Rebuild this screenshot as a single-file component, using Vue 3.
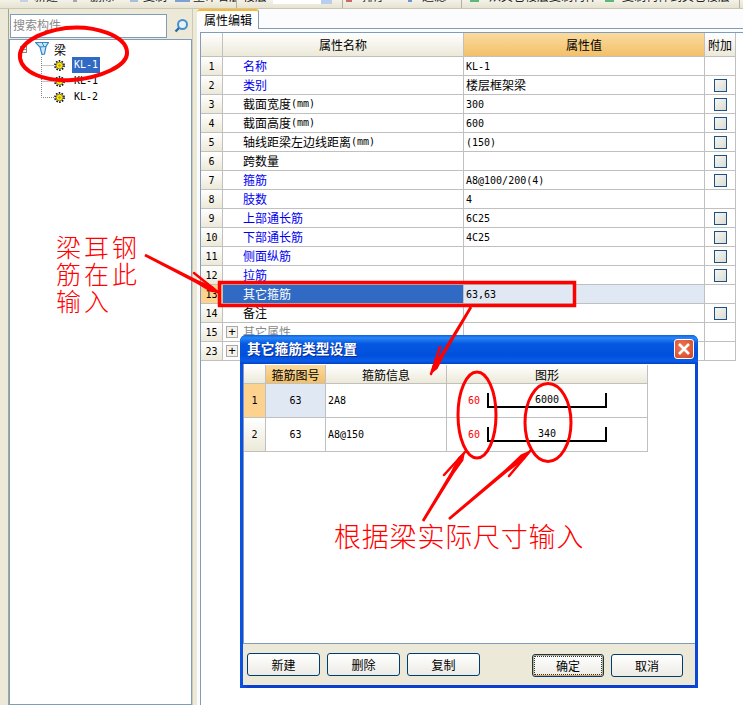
<template>
  <div class="app">
    <!-- Toolbar, mostly cropped off in the screenshot -->
    <div class="toolbar">
      <template v-for="(tool, i) in tools" :key="i">
        <div v-if="tool.sep" class="tool-sep" :style="{ width: tool.sep + 'px' }"></div>
        <div v-else-if="tool.combo" class="tool-combo"><span class="tool-combo-btn"></span></div>
        <div v-else class="tool" :style="{ width: tool.width + 'px' }">
          <span
            class="tool-icon"
            :style="{ width: tool.icon + 'px', marginRight: tool.gap + 'px', background: tool.color }"
          ></span>
          <span class="tool-label">{{ tool.label }}</span>
        </div>
      </template>
    </div>

    <div class="main">
      <div class="side-rail"></div>

      <!-- Tree of components -->
      <div class="tree-col">
        <div class="search-row">
          <div class="search-input">搜索构件</div>
          <svg class="search-btn" width="16" height="16" viewBox="0 0 16 16">
            <circle cx="9.5" cy="6.5" r="4.5" fill="#e4f2fb" stroke="#4a90c8" stroke-width="2" />
            <path d="M6 10 L2.5 13.5" stroke="#2a6aa8" stroke-width="2.4" />
          </svg>
        </div>
        <div class="tree">
          <div class="tree-root">
            <span class="expander"></span>
            <svg class="root-icon" width="14" height="14" viewBox="0 0 14 14">
              <path d="M0.5 1.5 H13.5 L11 5.5 L9.5 13 L7 13.5 L5 6 Z" fill="#cfe6f6" stroke="#2f86c6" stroke-width="1.2" />
              <path d="M5 6 L11 5.5 M7 1.5 L9 5.5" stroke="#2f86c6" />
            </svg>
            <span class="tree-text">梁</span>
          </div>
          <div class="tree-children">
            <svg class="tree-lines" width="13" height="48" viewBox="0 0 13 48">
              <path
                d="M0.5 0 V40.5 H13 M0.5 8.5 H13 M0.5 24.5 H13"
                fill="none"
                stroke="#888"
                stroke-dasharray="1 1"
              />
            </svg>
            <div class="tree-items">
              <div v-for="(node, i) in nodes" :key="i" class="tree-item">
                <svg class="gear" width="11" height="11" viewBox="0 0 11 11">
                  <circle cx="5.5" cy="5.5" r="4.6" fill="none" stroke="#111" stroke-width="1.6" stroke-dasharray="1.6 1.3" />
                  <circle cx="5.5" cy="5.5" r="3.4" fill="#ffe800" stroke="#333" stroke-width="0.6" />
                  <circle cx="5.5" cy="5.5" r="1.2" fill="#b8a000" />
                </svg>
                <span class="tree-label" :class="{ selected: i === 0 }">{{ node }}</span>
              </div>
            </div>
          </div>
        </div>
      </div>

      <div class="splitter"></div>

      <!-- Property editor -->
      <div class="editor">
        <div class="tab-strip">
          <div class="tab">属性编辑</div>
        </div>
        <div class="table-wrap">
          <div class="prop-row prop-head">
            <div class="cell num-head"></div>
            <div class="cell head-cell">属性名称</div>
            <div class="cell head-cell head-active">属性值</div>
            <div class="cell head-cell">附加</div>
          </div>
          <div
            v-for="row in rows"
            :key="row.no"
            class="prop-row"
            :class="{ current: row.no === 13 }"
          >
            <div class="cell num-cell">{{ row.no }}</div>
            <div class="cell name-cell" :class="{ blue: row.blue, muted: row.group }">
              <span v-if="row.group" class="plus-box">+</span>
              <span>{{ row.name }}</span><span v-if="row.unit" class="latin">{{ row.unit }}</span>
            </div>
            <div class="cell value-cell" :class="row.cjk ? 'cjk' : 'latin'">{{ row.value }}</div>
            <div class="cell add-cell">
              <span v-if="row.check" class="checkbox"></span>
            </div>
          </div>
        </div>
      </div>
    </div>

    <!-- Dialog floating over the editor -->
    <div class="dialog">
      <div class="dialog-title">
        <span class="dialog-title-text">其它箍筋类型设置</span>
        <span class="close-btn">
          <svg width="18" height="18" viewBox="0 0 18 18">
            <path d="M4 4 L14 14 M14 4 L4 14" stroke="#fff" stroke-width="2.6" />
          </svg>
        </span>
      </div>
      <div class="dialog-body">
        <div class="dialog-grid-area">
          <div class="d-row d-head">
            <div class="d-cell d-num-head"></div>
            <div class="d-cell d-head-cell d-head-active">箍筋图号</div>
            <div class="d-cell d-head-cell">箍筋信息</div>
            <div class="d-cell d-head-cell">图形</div>
          </div>
          <div v-for="(bar, i) in bars" :key="i" class="d-row d-data">
            <div class="d-cell d-num" :class="{ 'd-num-active': i === 0 }">{{ i + 1 }}</div>
            <div class="d-cell d-code latin" :class="{ 'd-code-active': i === 0 }">{{ bar.code }}</div>
            <div class="d-cell d-info latin">{{ bar.info }}</div>
            <div class="d-cell d-shape latin">
              <span class="hook-len">60</span>
              <span class="bar-shape"><span class="bar-len">{{ bar.len }}</span></span>
            </div>
          </div>
        </div>
        <div class="dialog-buttons">
          <div class="btn-group">
            <button class="btn">新建</button>
            <button class="btn">删除</button>
            <button class="btn">复制</button>
          </div>
          <div class="btn-group btn-group-right">
            <button class="btn btn-small btn-default"><span>确定</span></button>
            <button class="btn btn-small">取消</button>
          </div>
        </div>
      </div>
    </div>

    <!-- Red markup drawn on top of the screenshot -->
    <svg class="markup" width="743" height="705" viewBox="0 0 743 705">
      <g fill="none" stroke="#f00" stroke-linecap="round" stroke-linejoin="round">
        <path
          stroke-width="4"
          d="M20 58 C18 44 38 32 66 28 C96 25 126 36 127 52 C128 66 100 78 72 80 C44 82 22 72 20 58 Z"
        />
        <rect x="219.5" y="282.5" width="355" height="23" stroke-width="3.5" stroke-linejoin="miter" />
        <ellipse cx="477" cy="415" rx="19" ry="43" stroke-width="3" />
        <ellipse cx="548" cy="422.5" rx="23" ry="39" stroke-width="3" />
        <path
          v-for="(arrow, i) in arrows"
          :key="'wing' + i"
          stroke-width="2.5"
          :d="`M${arrow.wing[0]} ${arrow.wing[1]} L${arrow.to[0]} ${arrow.to[1]}`"
        />
      </g>
      <polygon v-for="(arrow, i) in arrows" :key="i" :points="shaft(arrow)" fill="#f00" />
    </svg>
    <div class="note note-left">梁耳钢<br />筋在此<br />输入</div>
    <div class="note note-bottom">根据梁实际尺寸输入</div>
  </div>
</template>

<script setup>
const tools = [
  { label: '新建', width: 53, icon: 8, gap: 6, color: '#c3d2e6' },
  { label: '删除', width: 57, icon: 4, gap: 13, color: '#a8a8a8' },
  { label: '复制', width: 45, icon: 8, gap: 5, color: '#a9bedc' },
  { label: '重命名层', width: 61, icon: 15, gap: 3, color: '#7fa0d4' },
  { sep: 7 },
  { label: '楼层', width: 30, icon: 0, gap: 0, color: 'transparent' },
  { combo: true },
  { sep: 4 },
  { label: '排序', width: 62, icon: 6, gap: 10, color: '#c86a6a' },
  { label: '过滤', width: 53, icon: 4, gap: 10, color: '#6f96d0' },
  { sep: 9 },
  { label: '从其它楼层复制构件', width: 135, icon: 9, gap: 10, color: '#5cb878' },
  { label: '复制构件到其它楼层', width: 134, icon: 9, gap: 8, color: '#5cb878' },
  { sep: 2 }
]

const nodes = ['KL-1', 'KL-1', 'KL-2']

const rows = [
  { no: 1, name: '名称', value: 'KL-1', blue: true },
  { no: 2, name: '类别', value: '楼层框架梁', blue: true, cjk: true, check: true },
  { no: 3, name: '截面宽度', unit: '(mm)', value: '300', check: true },
  { no: 4, name: '截面高度', unit: '(mm)', value: '600', check: true },
  { no: 5, name: '轴线距梁左边线距离', unit: '(mm)', value: '(150)', check: true },
  { no: 6, name: '跨数量', value: '', check: true },
  { no: 7, name: '箍筋', value: 'A8@100/200(4)', blue: true, check: true },
  { no: 8, name: '肢数', value: '4', blue: true },
  { no: 9, name: '上部通长筋', value: '6C25', blue: true, check: true },
  { no: 10, name: '下部通长筋', value: '4C25', blue: true, check: true },
  { no: 11, name: '侧面纵筋', value: '', blue: true, check: true },
  { no: 12, name: '拉筋', value: '', blue: true, check: true },
  { no: 13, name: '其它箍筋', value: '63,63' },
  { no: 14, name: '备注', value: '', check: true },
  { no: 15, name: '其它属性', value: '', group: true },
  { no: 23, name: '显示样式', value: '', group: true }
]

const bars = [
  { code: '63', info: '2A8', len: '6000' },
  { code: '63', info: 'A8@150', len: '340' }
]

const arrows = [
  { from: [145, 255], to: [219, 293], wing: [194, 273] },
  { from: [471, 307], to: [431, 374], wing: [440, 347] },
  { from: [423, 521], to: [465, 452], wing: [444, 475] },
  { from: [449, 519], to: [531, 450], wing: [509, 476] }
]

// hand-drawn arrows get thicker toward the tip
function shaft({ from, to }) {
  const dx = to[0] - from[0]
  const dy = to[1] - from[1]
  const len = Math.hypot(dx, dy)
  const nx = -dy / len
  const ny = dx / len
  const at = (t, w) => [from[0] + dx * t + nx * w, from[1] + dy * t + ny * w].join(',')
  return [at(0, 1.4), at(0.7, 1.8), at(0.9, 3), at(1, 0), at(0.9, -3), at(0.7, -1.8), at(0, -1.4)].join(' ')
}
</script>

<style>
html,
body {
  margin: 0;
  padding: 0;
  background: #ece9d8;
}
</style>

<style scoped>
.app {
  position: relative;
  width: 743px;
  height: 705px;
  overflow: hidden;
  display: flex;
  flex-direction: column;
  background: #ece9d8;
  color: #000;
  font-family: "Noto Sans CJK SC", "Liberation Sans", sans-serif;
  font-size: 12px;
}

.latin {
  font-family: "DejaVu Sans Mono", "Liberation Mono", monospace;
  font-size: 10px;
}

.cjk {
  font-size: 12px;
}

/* Toolbar */
.toolbar {
  height: 8px;
  flex: none;
  display: flex;
  padding-left: 20px;
  overflow: hidden;
  background: linear-gradient(#f4f2e8, #e6e3d2);
  border-bottom: 1px solid #c9c6b2;
}

.tool {
  flex: none;
  display: flex;
  height: 12px;
  margin-top: -10px;
  line-height: 12px;
  white-space: nowrap;
  overflow: hidden;
}

.tool-sep {
  flex: none;
  box-sizing: border-box;
  height: 8px;
  border-left: 1px solid #b4b19e;
}

.tool-icon {
  height: 12px;
  flex: none;
}

.tool-label {
  color: #222;
}

.tool-combo {
  flex: none;
  width: 59px;
  height: 4px;
  margin-right: 10px;
  display: flex;
  justify-content: flex-end;
  background: #fff;
}

.tool-combo-btn {
  width: 11px;
  background: #b9cdee;
}

/* Left column */
.main {
  flex: 1;
  min-height: 0;
  display: flex;
}

.side-rail {
  width: 8px;
  flex: none;
  border-right: 1px solid #a6a595;
}

.tree-col {
  width: 183px;
  flex: none;
  display: flex;
  flex-direction: column;
}

.search-row {
  height: 30px;
  flex: none;
  box-sizing: border-box;
  padding: 5px 0 0 1px;
  display: flex;
  gap: 6px;
}

.search-input {
  width: 157px;
  height: 24px;
  box-sizing: border-box;
  border: 1px solid #7f9db9;
  background: #fff;
  color: #888;
  font-size: 12px;
  line-height: 20px;
  padding-left: 2px;
}

.search-btn {
  margin-top: 4px;
}

.tree {
  flex: 1;
  box-sizing: border-box;
  border: 1px solid #7f9db9;
  background: #fff;
  padding: 1px 0 0 10px;
}

.tree-root {
  display: flex;
  align-items: center;
  height: 16px;
}

.expander {
  width: 7px;
  height: 7px;
  margin-right: 8px;
  border: 1px solid #888;
  box-sizing: border-box;
  background: linear-gradient(#888, #888) center / 5px 1px no-repeat #f4f4f4;
}

.root-icon {
  margin-top: -2px;
}

.tree-text {
  margin-left: 5px;
}

.tree-children {
  display: flex;
  margin-left: 21px;
}

.tree-lines {
  flex: none;
}

.tree-items {
  display: flex;
  flex-direction: column;
}

.tree-item {
  display: flex;
  align-items: center;
  height: 16px;
}

.tree-label {
  margin-left: 7px;
  padding: 0 2px;
  height: 16px;
  line-height: 16px;
  font-family: "DejaVu Sans Mono", "Liberation Mono", monospace;
  font-size: 10px;
}

.tree-label.selected {
  background: #316ac5;
  color: #fff;
}

.splitter {
  width: 5px;
  flex: none;
  background: #ece9d8;
  border-left: 1px solid #ccc9b6;
  box-sizing: border-box;
}

/* Property table */
.editor {
  flex: 1;
  min-width: 0;
  display: flex;
  flex-direction: column;
  background: #fcfcff;
}

.tab-strip {
  height: 20px;
  flex: none;
  box-sizing: border-box;
  border-bottom: 1px solid #7f9db9;
  display: flex;
}

.tab {
  width: 62px;
  height: 20px;
  box-sizing: border-box;
  border-top: 2px solid #ffb82e;
  border-right: 1px solid #7f9db9;
  background: #fff;
  padding-left: 7px;
  line-height: 17px;
  border-radius: 3px 3px 0 0;
}

.table-wrap {
  flex: 1;
  margin: 3px 0 0 3px;
  border-top: 1px solid #7f9db9;
  border-left: 1px solid #7f9db9;
  background: #fff;
}

.prop-row {
  display: grid;
  grid-template-columns: 22px 241px 241px 31px;
  height: 19px;
}

.prop-head {
  height: 24px;
}

.cell {
  box-sizing: border-box;
  border-right: 1px solid #c0c0c0;
  border-bottom: 1px solid #c0c0c0;
  display: flex;
  align-items: center;
  white-space: nowrap;
  overflow: hidden;
}

.num-head,
.head-cell,
.num-cell {
  background: linear-gradient(#fff, #ece9d8);
}

.head-cell {
  justify-content: center;
}

.head-active {
  background: linear-gradient(#fadb9f, #f3c069);
}

.num-cell {
  justify-content: center;
  font-family: "DejaVu Sans Mono", "Liberation Mono", monospace;
  font-size: 10px;
}

.name-cell {
  padding: 0 0 1px 20px;
}

.blue {
  color: #0000f0;
}

.muted {
  color: #888;
  padding-left: 3px;
}

.plus-box {
  width: 12px;
  height: 12px;
  box-sizing: border-box;
  border: 1px solid #aaa;
  background: #f4f2ea;
  color: #000;
  display: flex;
  align-items: center;
  justify-content: center;
  margin-right: 5px;
  font-family: "Liberation Sans", sans-serif;
  font-size: 13px;
  line-height: 1;
}

.value-cell {
  padding-left: 2px;
}

.value-cell.cjk {
  padding-bottom: 1px;
}

.add-cell {
  justify-content: center;
}

.checkbox {
  width: 13px;
  height: 13px;
  box-sizing: border-box;
  border: 1px solid #1c5180;
  background: linear-gradient(135deg, #f6f6f2, #dcdcd6);
}

.current .num-cell {
  background: #fcd28e;
}

.current .name-cell {
  background: #316ac5;
  color: #fff;
}

.current .value-cell {
  background: #e0e8f4;
}

/* Dialog */
.dialog {
  position: absolute;
  left: 240px;
  top: 335px;
  width: 458px;
  height: 353px;
  box-sizing: border-box;
  display: flex;
  flex-direction: column;
  border-radius: 6px 6px 0 0;
  background: linear-gradient(90deg, #0a55e4, #0a3fd0 2%, #0a3fd0 98%, #0a4ad8);
  padding: 0 3px 3px;
}

.dialog-title {
  height: 29px;
  flex: none;
  margin: 0 -3px;
  padding: 0 4px 0 7px;
  display: flex;
  align-items: center;
  justify-content: space-between;
  border-radius: 6px 6px 0 0;
  background: linear-gradient(#0a62e6 0%, #2a86f4 10%, #0558e2 30%, #0050dc 70%, #0a5cea 90%, #0340c0 100%);
  color: #fff;
  font-size: 13.75px;
  font-weight: 700;
  text-shadow: 1px 1px 0 #0a2a90;
}

.dialog-title-text {
  margin-top: -3px;
}

.close-btn {
  width: 20px;
  height: 20px;
  margin-top: -1px;
  box-sizing: border-box;
  border: 1px solid #fff;
  border-radius: 3px;
  background: radial-gradient(circle at 40% 40%, #ee7a5a, #d4431f);
  display: flex;
  align-items: center;
  justify-content: center;
}

.dialog-body {
  flex: 1;
  min-height: 0;
  display: flex;
  flex-direction: column;
  background: #ece9d8;
}

.dialog-grid-area {
  height: 280px;
  flex: none;
  box-sizing: border-box;
  border-bottom: 1px solid #7f9db9;
  border-left: 1px solid #7f9db9;
  background: #fff;
}

.d-row {
  display: grid;
  grid-template-columns: 22px 60px 121px 201px;
}

.d-head {
  height: 19px;
  margin-top: 1px;
}

.d-data {
  height: 34px;
}

.d-cell {
  box-sizing: border-box;
  border-right: 1px solid #c0c0c0;
  border-bottom: 1px solid #c0c0c0;
  display: flex;
  align-items: center;
}

.d-num-head,
.d-head-cell,
.d-num {
  background: linear-gradient(#fff, #ece9d8);
}

.d-head-cell,
.d-num,
.d-code {
  justify-content: center;
}

.d-head-active {
  background: linear-gradient(#fadb9f, #f3c069);
}

.d-num {
  font-family: "DejaVu Sans Mono", "Liberation Mono", monospace;
  font-size: 10px;
}

.d-num-active {
  background: #fcd28e;
}

.d-code-active {
  background: #e0e8f4;
}

.d-info {
  padding-left: 2px;
}

.d-shape {
  padding-left: 21px;
}

.hook-len {
  color: #f00;
  width: 19px;
  flex: none;
}

.bar-shape {
  width: 120px;
  height: 15px;
  box-sizing: border-box;
  display: flex;
  justify-content: center;
  border: 2px solid #000;
  border-top: 0;
  margin-bottom: 1px;
}

.bar-len {
  line-height: 11px;
  margin-top: 1px;
}

.dialog-buttons {
  flex: 1;
  display: flex;
  justify-content: space-between;
  padding: 9px 12px 0 4px;
}

.btn-group {
  display: flex;
  gap: 7px;
}

.btn-group-right {
  margin-top: 1px;
}

.btn {
  width: 73px;
  height: 23px;
  padding: 0;
  box-sizing: border-box;
  border: 1px solid #003c74;
  border-radius: 3px;
  background: linear-gradient(#fff, #ecebe5);
  color: #000;
  font: inherit;
}

.btn-small {
  width: 72px;
}

.btn-default {
  box-shadow: inset 0 0 0 1px #d8a860;
  outline: 1px dotted #333;
  outline-offset: -3px;
}

/* Markup overlay */
.markup {
  position: absolute;
  left: 0;
  top: 0;
  pointer-events: none;
}

.note {
  position: absolute;
  color: #f00;
  font-weight: 300;
}

.note-left {
  left: 56px;
  top: 233px;
  font-size: 25px;
  line-height: 27px;
  letter-spacing: 3px;
}

.note-bottom {
  left: 334px;
  top: 518px;
  font-size: 27px;
  line-height: 36px;
  letter-spacing: 0.8px;
  white-space: nowrap;
}
</style>
